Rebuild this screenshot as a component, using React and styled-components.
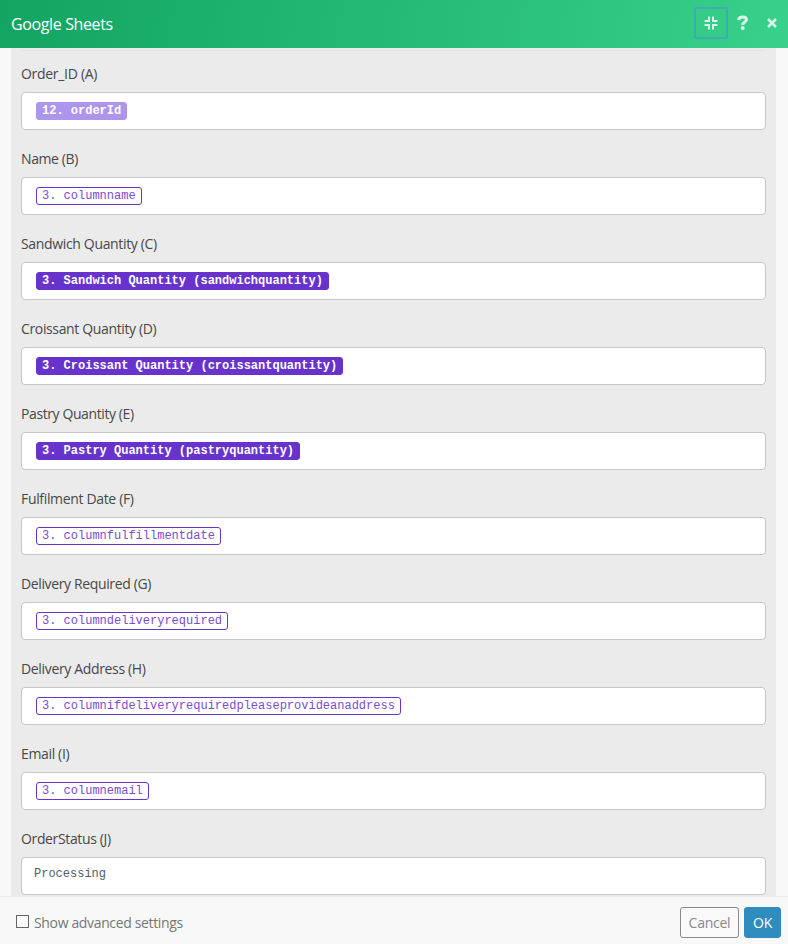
import React from 'react';
import styled, { createGlobalStyle, css } from 'styled-components';

const GlobalStyle = createGlobalStyle`
  *, *::before, *::after { box-sizing: border-box; }
  body { margin: 0; background: #f8f8f8; font-family: "Open Sans", "Noto Sans", sans-serif; }
  button { font-family: inherit; }
`;

const Dialog = styled.div`
  display: flex;
  flex-direction: column;
  width: 788px;
  height: 944px;
  overflow: hidden;
  background: #f8f8f8;
`;

const Header = styled.header`
  flex: 0 0 48px;
  display: flex;
  align-items: center;
  justify-content: space-between;
  padding: 0 2px 2px 11px;
  background: linear-gradient(100deg, #12a562 0%, #38d08b 100%);
  color: #fff;
`;

const Title = styled.h1`
  margin: 0;
  padding-top: 1px;
  font-size: 16px;
  line-height: 22px;
  font-weight: 400;
  letter-spacing: -0.37px;
`;

const Actions = styled.div`
  display: flex;
  align-items: center;
`;

const IconButton = styled.button`
  display: flex;
  align-items: center;
  justify-content: center;
  width: ${(p) => p.$width}px;
  height: 32px;
  padding: 0;
  border: ${(p) => (p.$focused ? '2px solid #40acb2' : '0')};
  border-radius: 2px;
  background: none;
  color: #d7f6e8;
`;

const Body = styled.main`
  flex: 1;
  min-height: 0;
  overflow: hidden;
  padding: 0 12px 0 11px;
`;

const Panel = styled.div`
  height: 100%;
  overflow: hidden;
  padding: 2px 10px 0;
  background: #ebebeb;
`;

const Fields = styled.div`
  border-top: 1px solid #e3e3e3;
  padding-top: 12px;
`;

const Field = styled.div`
  height: 85px;
`;

const Label = styled.label`
  display: block;
  height: 29px;
  font-size: 14px;
  line-height: 22px;
  letter-spacing: ${(p) => p.$tracking}px;
  color: #484848;
  white-space: nowrap;
`;

const Input = styled.div`
  display: flex;
  align-items: flex-start;
  height: 38px;
  padding: 9px 14px;
  border: 1px solid #c6c6c6;
  border-radius: 4px;
  background: #fff;
  font-family: "Courier New", "Liberation Mono", monospace;
  font-size: 12px;
`;

const pillKinds = {
  faded: css`background: #ae95ec; border-color: #ae95ec; color: #fff; font-weight: 700;`,
  solid: css`background: #6733cc; border-color: #6733cc; color: #fff; font-weight: 700;`,
  outline: css`background: #fff; border-color: #6733cc; color: #7a4bd3;`,
};

const Pill = styled.span`
  height: 18px;
  padding: 0 5px;
  border: 1px solid;
  border-radius: 3px;
  line-height: 17px;
  white-space: nowrap;
  ${(p) => pillKinds[p.$kind]}
`;

const Value = styled.span`
  margin-left: -2px;
  line-height: 14px;
  color: #555b63;
`;

const Footer = styled.footer`
  flex: 0 0 48px;
  display: flex;
  align-items: center;
  justify-content: space-between;
  padding: 4px 7px 0 16px;
  border-top: 1px solid #ebebeb;
`;

const Option = styled.label`
  display: flex;
  align-items: center;
  gap: 5px;
  font-size: 14px;
  line-height: 20px;
  color: #777;
  letter-spacing: -0.35px;
`;

const Checkbox = styled.input`
  appearance: none;
  width: 13px;
  height: 13px;
  margin: 0 0 3px;
  border: 1px solid #666;
  background: #fff;
`;

const Buttons = styled.div`
  display: flex;
  gap: 5px;
`;

const Button = styled.button`
  width: ${(p) => p.$width}px;
  height: 31px;
  padding: 1px 0 0;
  border: 1px solid ${(p) => (p.$primary ? '#308cbc' : '#888')};
  border-radius: 3px;
  background: ${(p) => (p.$primary ? '#308cbc' : '#f9f9f9')};
  color: ${(p) => (p.$primary ? '#fff' : '#888')};
  font-size: 14px;
  line-height: 20px;
  letter-spacing: -0.25px;
`;

const fields = [
  { label: 'Order_ID (A)', kind: 'faded', text: '12. orderId', tracking: -0.3 },
  { label: 'Name (B)', kind: 'outline', text: '3. columnname', tracking: -0.4 },
  { label: 'Sandwich Quantity (C)', kind: 'solid', text: '3. Sandwich Quantity (sandwichquantity)', tracking: -0.34 },
  { label: 'Croissant Quantity (D)', kind: 'solid', text: '3. Croissant Quantity (croissantquantity)', tracking: -0.36 },
  { label: 'Pastry Quantity (E)', kind: 'solid', text: '3. Pastry Quantity (pastryquantity)', tracking: -0.4 },
  { label: 'Fulfilment Date (F)', kind: 'outline', text: '3. columnfulfillmentdate', tracking: -0.34 },
  { label: 'Delivery Required (G)', kind: 'outline', text: '3. columndeliveryrequired', tracking: -0.37 },
  { label: 'Delivery Address (H)', kind: 'outline', text: '3. columnifdeliveryrequiredpleaseprovideanaddress', tracking: -0.34 },
  { label: 'Email (I)', kind: 'outline', text: '3. columnemail', tracking: -0.35 },
  { label: 'OrderStatus (J)', text: 'Processing', tracking: -0.36 },
];

const CompressIcon = () => (
  <svg width="14" height="14" viewBox="0 0 14 14" fill="none" stroke="currentColor" strokeWidth="2">
    <path d="M5 0.5V5H0.5M9 0.5V5H13.5M5 13.5V9H0.5M9 13.5V9H13.5" />
  </svg>
);

const HelpIcon = () => (
  <svg width="12" height="16" viewBox="0 0 12 16" fill="none" stroke="currentColor" strokeWidth="3">
    <path d="M1.5 5C2 2.8 3.5 2 5.6 2C8 2 9.4 3 9.4 4.7C9.4 7 5.7 7 5.7 10" />
    <circle cx="5.7" cy="13.1" r="2" fill="currentColor" stroke="none" />
  </svg>
);

const CloseIcon = () => (
  <svg width="10" height="10" viewBox="0 0 10 10" fill="none" stroke="currentColor" strokeWidth="2.6">
    <path d="M1 1L9 9M9 1L1 9" />
  </svg>
);

export default function App() {
  return (
    <>
      <GlobalStyle />
      <Dialog>
        <Header>
          <Title>Google Sheets</Title>
          <Actions>
            <IconButton $width={34} $focused aria-label="Restore size"><CompressIcon /></IconButton>
            <IconButton $width={29} aria-label="Help"><HelpIcon /></IconButton>
            <IconButton $width={29} aria-label="Close"><CloseIcon /></IconButton>
          </Actions>
        </Header>
        <Body>
          <Panel>
            <Fields>
              {fields.map((f) => (
                <Field key={f.label}>
                  <Label $tracking={f.tracking}>{f.label}</Label>
                  <Input>
                    {f.kind ? <Pill $kind={f.kind}>{f.text}</Pill> : <Value>{f.text}</Value>}
                  </Input>
                </Field>
              ))}
            </Fields>
          </Panel>
        </Body>
        <Footer>
          <Option><Checkbox type="checkbox" />Show advanced settings</Option>
          <Buttons>
            <Button $width={59}>Cancel</Button>
            <Button $width={37} $primary>OK</Button>
          </Buttons>
        </Footer>
      </Dialog>
    </>
  );
}
